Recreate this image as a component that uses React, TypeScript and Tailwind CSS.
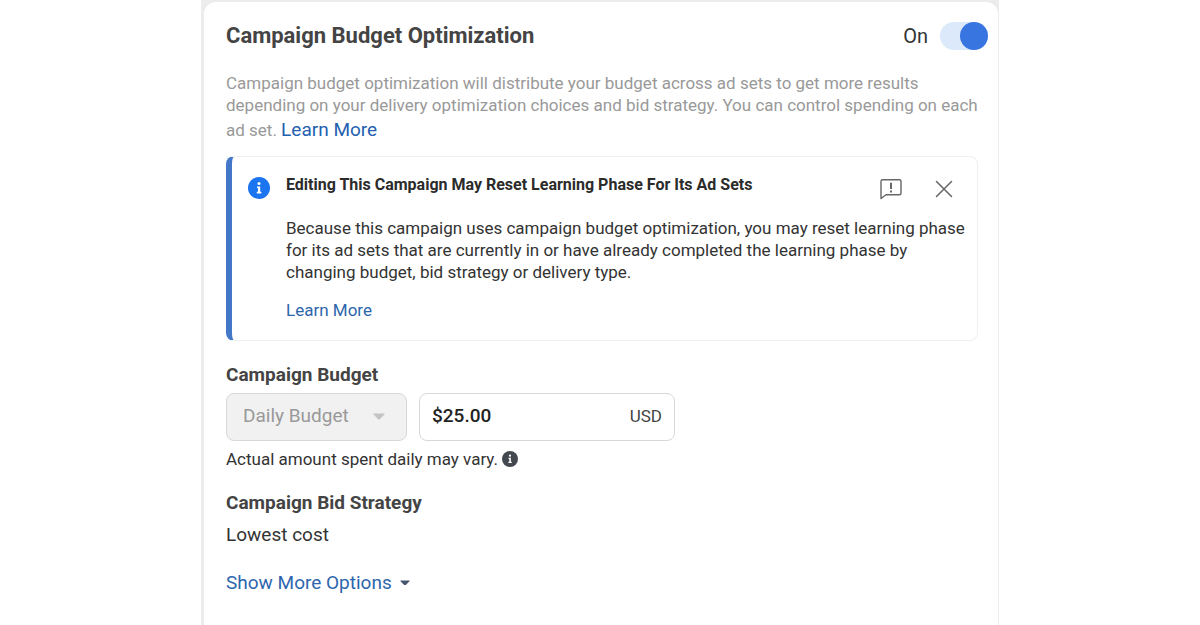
import { useState } from "react"

function InfoIcon({ className }: { className?: string }) {
    return (
        <svg viewBox="0 0 22 22" className={className} aria-hidden="true">
            <circle cx="11" cy="11" r="11" fill="currentColor" />
            <circle cx="11" cy="6.4" r="1.5" fill="#fff" />
            <path d="M9 9.4h3.2v5.4h1.2v1.6H8.8v-1.6H10v-3.8H9z" fill="#fff" />
        </svg>
    )
}

function CaretIcon({ className }: { className?: string }) {
    return (
        <svg viewBox="0 0 12 7" className={className} aria-hidden="true">
            <path d="M1 .5h10c.6 0 .8.6.4 1L6.8 6.2c-.5.5-1.1.5-1.6 0L.6 1.5C.2 1.1.4.5 1 .5z" fill="currentColor" />
        </svg>
    )
}

function LearningNotice({ onClose }: { onClose: () => void }) {
    return (
        <section className="mt-3 flex gap-4 rounded-lg border border-l-6 border-[#f0f0f0] border-l-[#4377c8] pt-4 pr-2 pb-4 pl-4">
            <InfoIcon className="mt-1 size-[22px] shrink-0 text-[#1b74f0]" />
            <div className="flex-1 text-[17px] text-[#333]">
                <div className="flex items-start pr-4">
                    <h2 className="flex-1 text-base leading-6 font-bold text-[#2b2b2b]">
                        Editing This Campaign May Reset Learning Phase For Its Ad Sets
                    </h2>
                    <div className="flex items-center gap-8 pt-1 text-[#666]">
                        <button type="button" aria-label="Give feedback">
                            <svg viewBox="0 0 24 24" className="size-6" fill="none" stroke="currentColor" strokeWidth="1.4" strokeLinejoin="round">
                                <path d="M3.5 2.7h17q1.5 0 1.5 1.5v12q0 1.5-1.5 1.5H7L2 21.5V4.2q0-1.5 1.5-1.5z" />
                                <path d="M12 5.7v6.3M12 13.5v2" strokeWidth="2" />
                            </svg>
                        </button>
                        <button type="button" aria-label="Close" onClick={onClose}>
                            <svg viewBox="0 0 18 18" className="size-[18px]" fill="none" stroke="currentColor" strokeWidth="1.5" strokeLinecap="round">
                                <path d="M1.5 1.5l15 15M16.5 1.5l-15 15" />
                            </svg>
                        </button>
                    </div>
                </div>
                <p className="mt-4 leading-[22px]">
                    Because this campaign uses campaign budget optimization, you may reset learning phase for its ad sets that are currently in or have already completed the learning phase by changing budget, bid strategy or delivery type.
                </p>
                <a href="#learning-phase" className="mt-4 inline-block leading-[22px] text-[#2d66ad]">Learn More</a>
            </div>
        </section>
    )
}

function App() {
    const [enabled, setEnabled] = useState(true)
    const [showNotice, setShowNotice] = useState(true)
    const [budget, setBudget] = useState("$25.00")

    return (
        <main className="min-h-screen bg-white font-['Roboto',sans-serif] text-[#333]">
            <div className="mx-auto flex min-h-screen max-w-[798px] bg-[#ececec] pt-0.5 pr-px pl-[3px]">
                <div className="w-full rounded-t-xl bg-white pt-5 pr-5 pl-[22px]">
                    <header className="flex items-center justify-between">
                        <h1 className="text-[22px] leading-7 font-bold text-[#444]">Campaign Budget Optimization</h1>
                        <label className="-mr-2.5 flex items-center gap-3 text-xl leading-7">
                            On
                            <input
                                type="checkbox"
                                role="switch"
                                checked={enabled}
                                onChange={(e) => setEnabled(e.target.checked)}
                                className="h-7 w-12 appearance-none rounded-full bg-gray-200 before:block before:size-7 before:rounded-full before:bg-gray-500 checked:bg-[#dce9fb] checked:before:ml-5 checked:before:bg-[#3975e0]"
                            />
                        </label>
                    </header>

                    <p className="mt-[22px] text-[17px] leading-[22px] text-[#999]">
                        Campaign budget optimization will distribute your budget across ad sets to get more results depending on your delivery optimization choices and bid strategy. You can control spending on each ad set.{" "}
                        <a href="#budget-optimization" className="inline-block text-[19px] leading-7 text-[#2360b0]">Learn More</a>
                    </p>

                    {showNotice && <LearningNotice onClose={() => setShowNotice(false)} />}

                    <h2 className="mt-5 text-[19px] leading-7 font-bold text-[#444]">
                        <label htmlFor="budget">Campaign Budget</label>
                    </h2>
                    <div className="mt-1 flex gap-3">
                        <div className="relative w-[181px]">
                            <select
                                disabled
                                aria-label="Budget type"
                                className="h-12 w-full appearance-none rounded-lg border border-[#d8d8d8] bg-[#f1f1f1] px-4 text-[19px] text-[#999] opacity-100"
                            >
                                <option>Daily Budget</option>
                            </select>
                            <CaretIcon className="pointer-events-none absolute top-5 right-[22px] w-3 text-[#c4c4c4]" />
                        </div>
                        <div className="flex h-12 w-64 items-center rounded-lg border border-[#d8d8d8] px-3">
                            <input
                                id="budget"
                                value={budget}
                                onChange={(e) => setBudget(e.target.value)}
                                className="w-full min-w-0 flex-1 text-[19px] font-medium text-[#222] outline-none"
                            />
                            <span className="text-[17px] text-[#444]">USD</span>
                        </div>
                    </div>
                    <p className="mt-2 flex items-center gap-1 text-[17px] leading-5">
                        Actual amount spent daily may vary.
                        <InfoIcon className="size-4 text-[#444950]" />
                    </p>

                    <h2 className="mt-5 text-[19px] leading-7 font-bold text-[#444]">Campaign Bid Strategy</h2>
                    <p className="mt-1 text-[19px] leading-7">Lowest cost</p>

                    <button type="button" className="mt-5 flex items-center gap-2 text-[19px] leading-7 text-[#2d66ad]">
                        Show More Options
                        <CaretIcon className="w-2.5 text-[#46566e]" />
                    </button>
                </div>
            </div>
        </main>
    )
}

export default App
